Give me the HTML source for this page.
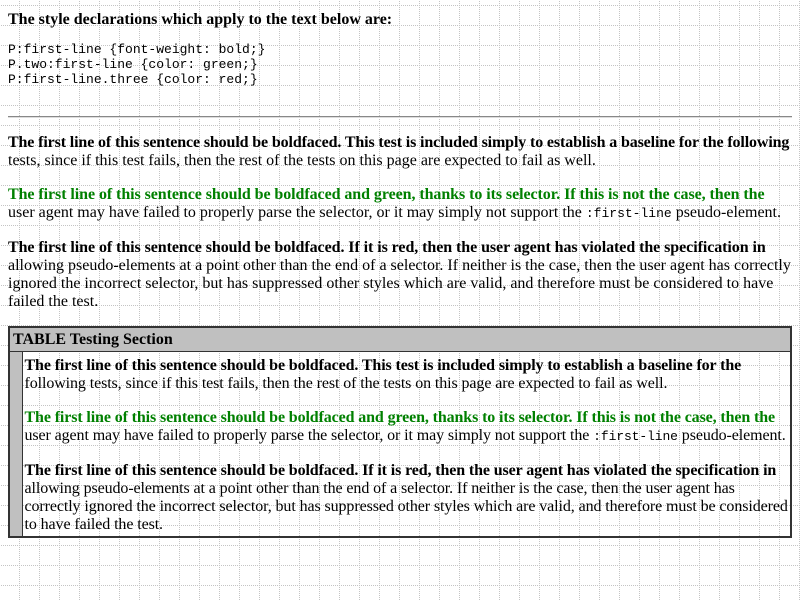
<!DOCTYPE html>
<html><head><style>
html,body{margin:0;padding:0}
body{width:800px;height:600px;position:relative;font-family:"Liberation Serif",serif;font-size:16px;line-height:18px;color:#000;background:#fff}
#bg{position:absolute;left:0;top:0;z-index:0}
#c{position:relative;z-index:1;padding:8px}
h3{font-size:16px;font-weight:bold;margin:0;padding-top:3px}
pre{font-family:"Liberation Mono",monospace;font-size:13px;line-height:15px;margin:13px 0 0}
hr{margin:29px 0 0;border:0;border-top:1px solid #888;border-bottom:1px solid #ddd;height:0}
p{margin:16px 0 0;white-space:nowrap}
b{font-weight:bold;letter-spacing:-0.07px}
b.t{letter-spacing:-0.13px}
.g{color:green}
code{font-family:"Liberation Mono",monospace;font-size:13px}
table{border-collapse:collapse;border:2px solid #333;margin-top:15px;width:784px;table-layout:fixed}
td{padding:0;vertical-align:top}
.hd{background:#c0c0c0;font-weight:bold;border:1px solid #333;padding:3px 3px 2px;height:18px}
.side{background:#c0c0c0;border:1px solid #333}
.ct{border:1px solid #333;padding:5px 2px 2px 2px;letter-spacing:-0.1px;overflow:visible}
.ct b{letter-spacing:-0.12px}
.ct p:first-child{margin-top:0}
</style></head><body>
<svg id="bg" width="800" height="600"><defs><pattern id="p" x="19" y="5" width="20" height="20" patternUnits="userSpaceOnUse"><g fill="#c4c4c4"><rect x="0" y="0" width="1" height="1"/><rect x="2" y="0" width="1" height="1"/><rect x="4" y="0" width="1" height="1"/><rect x="6" y="0" width="1" height="1"/><rect x="8" y="0" width="1" height="1"/><rect x="10" y="0" width="1" height="1"/><rect x="12" y="0" width="1" height="1"/><rect x="14" y="0" width="1" height="1"/><rect x="16" y="0" width="1" height="1"/><rect x="18" y="0" width="1" height="1"/><rect x="0" y="2" width="1" height="1"/><rect x="0" y="4" width="1" height="1"/><rect x="0" y="6" width="1" height="1"/><rect x="0" y="8" width="1" height="1"/><rect x="0" y="10" width="1" height="1"/><rect x="0" y="12" width="1" height="1"/><rect x="0" y="14" width="1" height="1"/><rect x="0" y="16" width="1" height="1"/><rect x="0" y="18" width="1" height="1"/></g></pattern></defs><rect width="800" height="600" fill="url(#p)"/></svg>
<div id="c">
<h3>The style declarations which apply to the text below are:</h3>
<pre>P:first-line {font-weight: bold;}
P.two:first-line {color: green;}
P:first-line.three {color: red;}</pre>
<hr>
<p><b class="t">The first line of this sentence should be boldfaced. This test is included simply to establish a baseline for the following</b><br>tests, since if this test fails, then the rest of the tests on this page are expected to fail as well.</p>
<p><b class="g">The first line of this sentence should be boldfaced and green, thanks to its selector. If this is not the case, then the</b><br>user agent may have failed to properly parse the selector, or it may simply not support the <code>:first-line</code> pseudo-element.</p>
<p><b>The first line of this sentence should be boldfaced. If it is red, then the user agent has violated the specification in</b><br>allowing pseudo-elements at a point other than the end of a selector. If neither is the case, then the user agent has correctly<br>ignored the incorrect selector, but has suppressed other styles which are valid, and therefore must be considered to have<br>failed the test.</p>
<table><colgroup><col style="width:13px"><col></colgroup><tr><td colspan="2" class="hd">TABLE Testing Section</td></tr>
<tr><td class="side"></td><td class="ct">
<p><b>The first line of this sentence should be boldfaced. This test is included simply to establish a baseline for the</b><br>following tests, since if this test fails, then the rest of the tests on this page are expected to fail as well.</p>
<p><b class="g">The first line of this sentence should be boldfaced and green, thanks to its selector. If this is not the case, then the</b><br>user agent may have failed to properly parse the selector, or it may simply not support the <code>:first-line</code> pseudo-element.</p>
<p><b>The first line of this sentence should be boldfaced. If it is red, then the user agent has violated the specification in</b><br>allowing pseudo-elements at a point other than the end of a selector. If neither is the case, then the user agent has<br>correctly ignored the incorrect selector, but has suppressed other styles which are valid, and therefore must be considered<br>to have failed the test.</p>
</td></tr></table>
</div>
</body></html>
